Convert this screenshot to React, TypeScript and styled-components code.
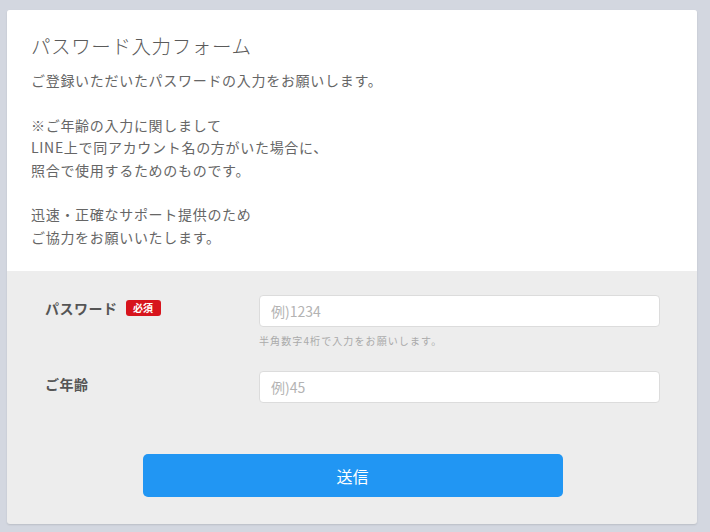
import React from "react";
import styled, { createGlobalStyle } from "styled-components";

const Global = createGlobalStyle`
  html, body { margin: 0; padding: 0; background: #d3d7e0; }
  body { font-family: "Noto Sans CJK JP", "Noto Sans", sans-serif; color: #555; }
  * { box-sizing: border-box; }
`;

const Page = styled.div`
  padding: 10px 13px 8px 7px;
`;

const Card = styled.div`
  background: #ededed;
  border-radius: 3px;
  box-shadow: 0 1px 2px rgba(0, 0, 0, 0.12);
  overflow: hidden;
`;

const Intro = styled.section`
  background: #fff;
  padding: 21px 24px 23px;
`;

const Title = styled.h1`
  margin: 0 0 8px;
  font-size: 19.5px;
  font-weight: 300;
  line-height: 30px;
  color: #5a5a5a;
  letter-spacing: 0.6px;
`;

const Body = styled.p`
  margin: 0;
  font-size: 14px;
  line-height: 22.4px;
  color: #666;
  letter-spacing: 0.7px;
  white-space: pre-line;
`;

const Form = styled.form`
  padding: 24px 37px 27px 38px;
  display: flex;
  flex-direction: column;
`;

const Row = styled.div<{ $gap?: number }>`
  display: grid;
  grid-template-columns: 214px 1fr;
  margin-bottom: ${(p) => p.$gap ?? 0}px;
`;

const Label = styled.label`
  display: flex;
  align-items: center;
  gap: 8px;
  height: 25px;
  font-size: 14px;
  font-weight: 700;
  color: #555;
  letter-spacing: 0.5px;
`;

const Badge = styled.span`
  display: inline-flex;
  align-items: center;
  justify-content: center;
  width: 35px;
  height: 16px;
  border-radius: 3px;
  background: #d7141d;
  color: #fff;
  font-size: 10px;
  font-weight: 700;
  letter-spacing: 0;
`;

const Field = styled.div`
  display: flex;
  flex-direction: column;
`;

const Input = styled.input`
  height: 32px;
  width: 100%;
  border: 1px solid #dcdcdc;
  border-radius: 4px;
  background: #fff;
  padding: 0 11px;
  font-family: "Noto Sans CJK JP", "Noto Sans", sans-serif;
  font-size: 14px;
  color: #555;
  outline: none;
  &::placeholder { color: #b3b3b3; }
`;

const Hint = styled.p`
  margin: 6px 0 0;
  font-size: 10px;
  line-height: 16px;
  color: #aaa;
  letter-spacing: 1.1px;
`;

const Submit = styled.button`
  align-self: center;
  width: 420px;
  height: 43px;
  border: none;
  border-radius: 5px;
  background: #2196f3;
  color: #fff;
  font-family: "Noto Sans CJK JP", "Noto Sans", sans-serif;
  font-size: 16px;
  cursor: pointer;
`;

export default function App() {
  return (
    <>
      <Global />
      <Page>
        <Card>
          <Intro>
            <Title>パスワード入力フォーム</Title>
            <Body>
              {"ご登録いただいたパスワードの入力をお願いします。\n\n※ご年齢の入力に関しまして\nLINE上で同アカウント名の方がいた場合に、\n照合で使用するためのものです。\n\n迅速・正確なサポート提供のため\nご協力をお願いいたします。"}
            </Body>
          </Intro>
          <Form onSubmit={(e) => e.preventDefault()}>
            <Row $gap={22}>
              <Label>
                パスワード<Badge>必須</Badge>
              </Label>
              <Field>
                <Input placeholder="例)1234" />
                <Hint>半角数字4桁で入力をお願いします。</Hint>
              </Field>
            </Row>
            <Row $gap={51}>
              <Label>ご年齢</Label>
              <Field>
                <Input placeholder="例)45" />
              </Field>
            </Row>
            <Submit type="submit">送信</Submit>
          </Form>
        </Card>
      </Page>
    </>
  );
}
